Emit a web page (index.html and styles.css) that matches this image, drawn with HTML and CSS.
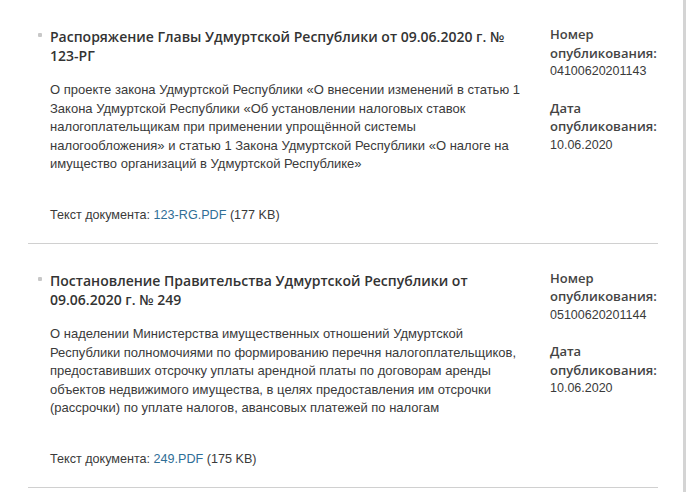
FILE: index.html
```html
<!DOCTYPE html>
<html lang="ru">
<head>
<meta charset="utf-8">
<link rel="stylesheet" href="styles.css">
</head>
<body>
<div class="page">
  <ul class="docs">
    <li class="doc">
      <div class="main">
        <h3 class="title">Распоряжение Главы Удмуртской Республики от 09.06.2020 г. № 123-РГ</h3>
        <p class="desc">О проекте закона Удмуртской Республики «О внесении изменений в статью 1 Закона Удмуртской Республики «Об установлении налоговых ставок налогоплательщикам при применении упрощённой системы налогообложения» и статью 1 Закона Удмуртской Республики «О налоге на имущество организаций в Удмуртской Республике»</p>
        <p class="file">Текст документа: <a href="#">123-RG.PDF</a> (177 KB)</p>
      </div>
      <dl class="meta">
        <dt>Номер опубликования:</dt>
        <dd>04100620201143</dd>
        <dt>Дата опубликования:</dt>
        <dd>10.06.2020</dd>
      </dl>
    </li>
    <li class="doc">
      <div class="main">
        <h3 class="title">Постановление Правительства Удмуртской Республики от 09.06.2020 г. № 249</h3>
        <p class="desc">О наделении Министерства имущественных отношений Удмуртской Республики полномочиями по формированию перечня налогоплательщиков, предоставивших отсрочку уплаты арендной платы по договорам аренды объектов недвижимого имущества, в целях предоставления им отсрочки (рассрочки) по уплате налогов, авансовых платежей по налогам</p>
        <p class="file">Текст документа: <a href="#">249.PDF</a> (175 KB)</p>
      </div>
      <dl class="meta">
        <dt>Номер опубликования:</dt>
        <dd>05100620201144</dd>
        <dt>Дата опубликования:</dt>
        <dd>10.06.2020</dd>
      </dl>
    </li>
  </ul>
</div>
</body>
</html>
```

FILE: styles.css
```css
html, body {
  margin: 0;
  padding: 0;
  background: #fff;
}
.page {
  width: 686px;
  min-height: 492px;
  border-right: 3px solid #d4d4d4;
  box-sizing: border-box;
}
.docs {
  list-style: none;
  margin: 0;
  padding: 0 0 0 28px;
  width: 658px;
  box-sizing: border-box;
}
.doc {
  display: flex;
  gap: 22px;
  padding: 27px 0 19px 22px;
  border-bottom: 1px solid #d0d0d0;
}
.main {
  width: 478px;
  flex: none;
}
.title {
  position: relative;
  margin: 0;
  font-family: "Open Sans", sans-serif;
  font-weight: 600;
  font-size: 14px;
  line-height: 19px;
  color: #333;
}
.title::before {
  content: "";
  position: absolute;
  left: -12px;
  top: 6px;
  width: 4px;
  height: 4px;
  border-radius: 1px;
  background: #c8c8c8;
}
.desc {
  margin: 16px 0 0;
  font-family: "Liberation Sans", Arial, sans-serif;
  font-size: 13px;
  line-height: 18.6px;
  color: #3a3a3a;
}
.file {
  margin: 32px 0 0;
  font-family: "Liberation Sans", Arial, sans-serif;
  font-size: 12.6px;
  line-height: 18px;
  color: #3a3a3a;
}
.file a {
  color: #2f6e96;
  text-decoration: none;
}
.meta {
  margin: -2px 0 0;
  width: 110px;
  flex: none;
}
.meta dt {
  font-family: "Open Sans", sans-serif;
  font-weight: 600;
  font-size: 13px;
  line-height: 18.5px;
  color: #444;
}
.meta dd {
  margin: 0 0 18px;
  font-family: "Liberation Sans", Arial, sans-serif;
  font-size: 12.5px;
  line-height: 18.5px;
  color: #3a3a3a;
}
```
